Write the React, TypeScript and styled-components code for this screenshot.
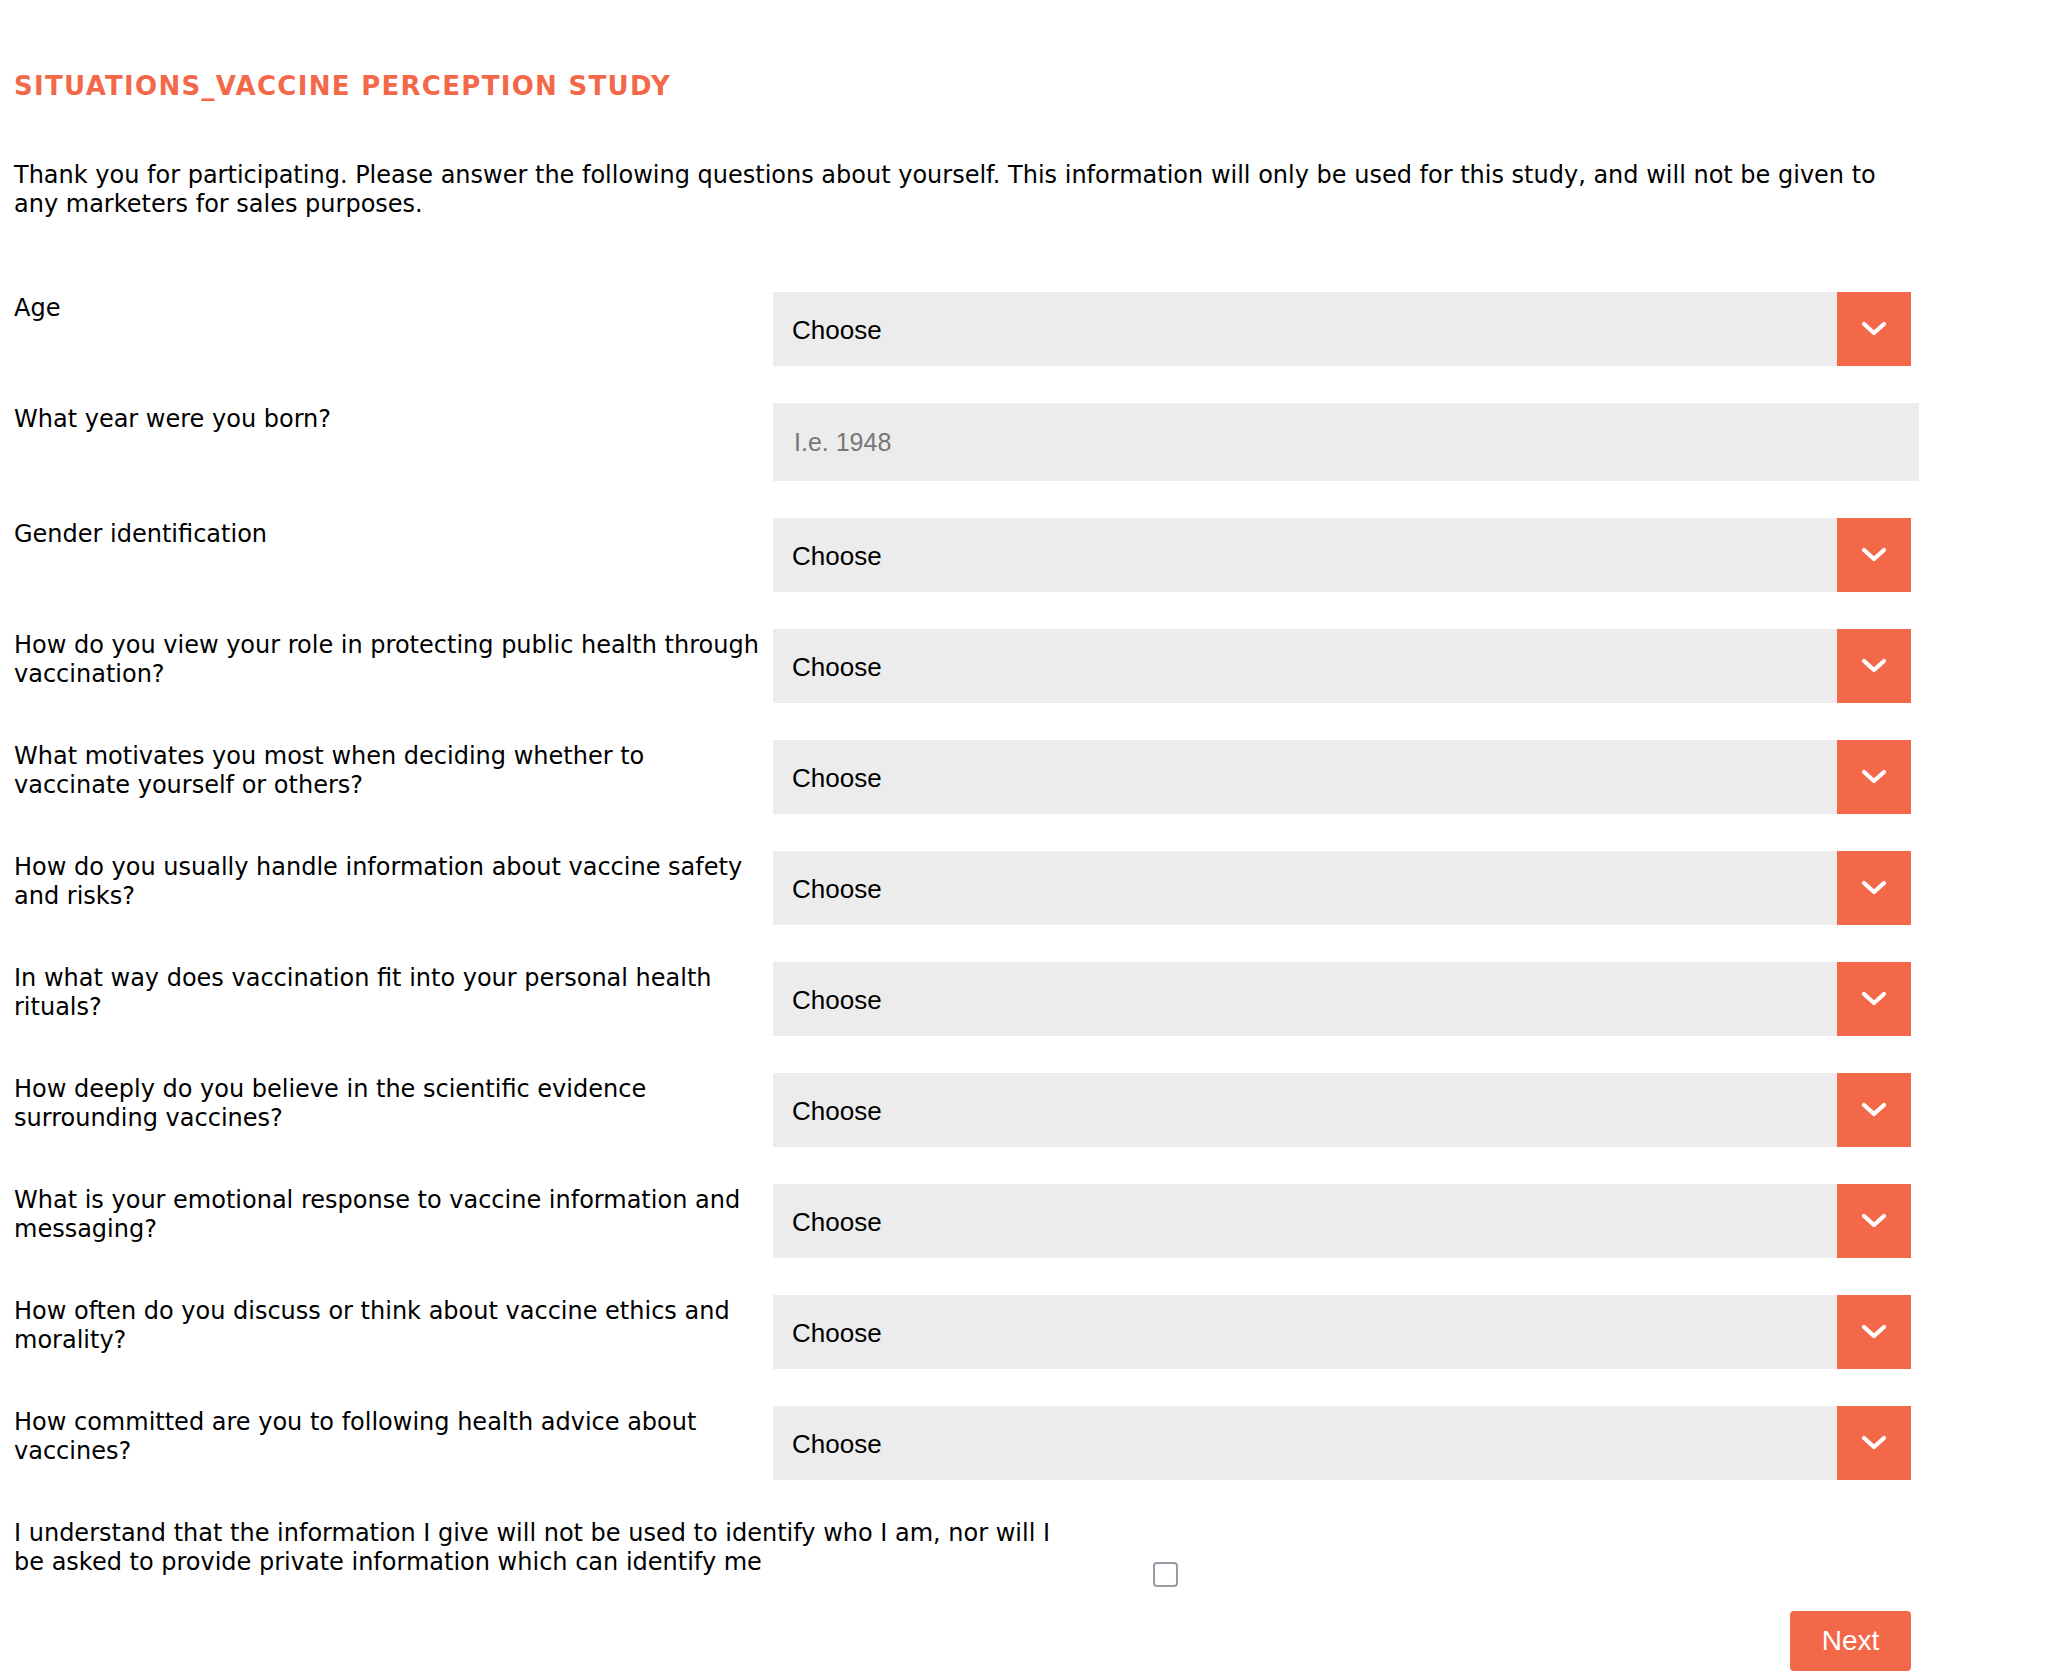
import React from "react";
import styled, { createGlobalStyle } from "styled-components";

const GlobalStyle = createGlobalStyle`
  html, body {
    margin: 0;
    padding: 0;
    background: #ffffff;
  }
  body {
    font-family: "DejaVu Sans", "Liberation Sans", sans-serif;
    color: #000000;
  }
  * { box-sizing: border-box; }
`;

const ORANGE = "#f4684a";

const Page = styled.main`
  width: 1919px;
  padding: 70px 0 0 14px;
`;

const Title = styled.h1`
  margin: 0;
  font-family: "DejaVu Sans", sans-serif;
  font-weight: 700;
  font-size: 26px;
  line-height: 32px;
  letter-spacing: 1.3px;
  color: ${ORANGE};
  text-transform: uppercase;
`;

const Intro = styled.p`
  margin: 59px 0 0 0;
  font-size: 24px;
  line-height: 29px;
  color: #000000;
`;

const Form = styled.form`
  margin-top: 73px;
  display: flex;
  flex-direction: column;
  gap: 37px;
`;

const Row = styled.div`
  display: grid;
  grid-template-columns: 759px 1fr;
  align-items: start;
`;

const Label = styled.label`
  max-width: 751px;
  padding-top: 2px;
  font-size: 24px;
  line-height: 29px;
  color: #000000;
`;

const SelectWrap = styled.div`
  display: flex;
  height: 74px;
  margin-right: 8px;
  background: #ececec;
`;

const NativeSelect = styled.select`
  flex: 1;
  appearance: none;
  -webkit-appearance: none;
  border: none;
  outline: none;
  background: transparent;
  padding: 2px 0 0 19px;
  font-family: "Liberation Sans", Arial, sans-serif;
  font-size: 26px;
  color: #000000;
  height: 100%;
`;

const ArrowBox = styled.div`
  width: 74px;
  height: 74px;
  background: ${ORANGE};
  display: flex;
  align-items: center;
  justify-content: center;
`;

const TextInput = styled.input`
  height: 78px;
  width: 100%;
  border: none;
  outline: none;
  background: #ececec;
  padding: 0 0 0 21px;
  font-family: "Liberation Sans", Arial, sans-serif;
  font-size: 25px;
  color: #000000;
  &::placeholder {
    color: #777777;
  }
`;

const ConsentRow = styled.div`
  display: flex;
  align-items: flex-start;
`;

const ConsentLabel = styled.label`
  width: 1056px;
  padding-top: 2px;
  font-size: 24px;
  line-height: 29px;
  color: #000000;
`;

const Check = styled.input`
  appearance: none;
  -webkit-appearance: none;
  width: 25px;
  height: 25px;
  margin: 45px 0 0 83px;
  border: 2px solid #9a9aa4;
  border-radius: 4px;
  background: #ffffff;
`;

const Actions = styled.div`
  display: flex;
  justify-content: flex-end;
  padding-right: 8px;
  margin-top: -13px;
`;

const NextButton = styled.button`
  width: 121px;
  height: 60px;
  border: none;
  border-radius: 4px;
  background: ${ORANGE};
  color: #ffffff;
  font-family: "Liberation Sans", Arial, sans-serif;
  font-size: 28px;
  cursor: pointer;
`;

const Chevron = () => (
  <svg width="28" height="18" viewBox="0 0 28 18" aria-hidden="true">
    <polyline
      points="4,4 14,13 24,4"
      fill="none"
      stroke="#ffffff"
      strokeWidth="4.2"
      strokeLinecap="round"
      strokeLinejoin="round"
    />
  </svg>
);

const Select: React.FC<{ id: string }> = ({ id }) => (
  <SelectWrap>
    <NativeSelect id={id} defaultValue="">
      <option value="">Choose</option>
    </NativeSelect>
    <ArrowBox>
      <Chevron />
    </ArrowBox>
  </SelectWrap>
);

const questions = [
  "How do you view your role in protecting public health through vaccination?",
  "What motivates you most when deciding whether to vaccinate yourself or others?",
  "How do you usually handle information about vaccine safety and risks?",
  "In what way does vaccination fit into your personal health rituals?",
  "How deeply do you believe in the scientific evidence surrounding vaccines?",
  "What is your emotional response to vaccine information and messaging?",
  "How often do you discuss or think about vaccine ethics and morality?",
  "How committed are you to following health advice about vaccines?",
];

export default function App() {
  return (
    <>
      <GlobalStyle />
      <Page>
        <Title>SITUATIONS_VACCINE PERCEPTION STUDY</Title>
        <Intro>
          Thank you for participating. Please answer the following questions about yourself. This
          information will only be used for this study, and will not be given to any marketers for
          sales purposes.
        </Intro>
        <Form onSubmit={(e) => e.preventDefault()}>
          <Row>
            <Label htmlFor="age">Age</Label>
            <Select id="age" />
          </Row>
          <Row>
            <Label htmlFor="year">What year were you born?</Label>
            <TextInput id="year" placeholder="I.e. 1948" />
          </Row>
          <Row>
            <Label htmlFor="gender">Gender identification</Label>
            <Select id="gender" />
          </Row>
          {questions.map((q, i) => (
            <Row key={i}>
              <Label htmlFor={`q${i}`}>{q}</Label>
              <Select id={`q${i}`} />
            </Row>
          ))}
          <ConsentRow>
            <ConsentLabel htmlFor="consent">
              I understand that the information I give will not be used to identify who I am, nor
              will I be asked to provide private information which can identify me
            </ConsentLabel>
            <Check type="checkbox" id="consent" />
          </ConsentRow>
          <Actions>
            <NextButton type="submit">Next</NextButton>
          </Actions>
        </Form>
      </Page>
    </>
  );
}
